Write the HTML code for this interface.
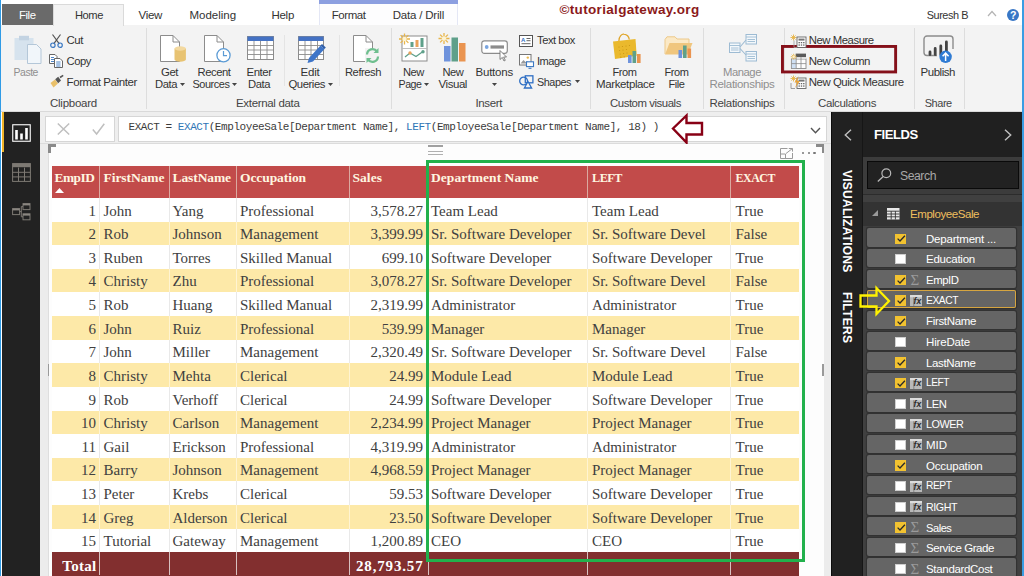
<!DOCTYPE html>
<html lang="en"><head><meta charset="utf-8"><title>Power BI Desktop - EXACT function</title>
<style>
html,body{margin:0;padding:0;}
body{width:1024px;height:576px;overflow:hidden;position:relative;background:#fff;font-family:"Liberation Sans",sans-serif;}
.a{position:absolute;}
.t{position:absolute;white-space:pre;}
svg{position:absolute;overflow:visible;}
.sep{position:absolute;width:1px;background:#dddddd;top:28px;height:81px;}
.fi{position:absolute;left:867.2px;width:149.2px;height:18.2px;background:#656565;border-radius:2px;box-shadow:0 0 0 1.2px #323232;}
.cb{position:absolute;left:895px;width:11px;height:10.2px;}
.cb.on{background:#f2c230;}
.cb.off{background:#fff;box-shadow:inset 0 0 0 1px #cfcfcf;}
.hs{position:absolute;top:166px;height:32px;width:1px;background:#dba9a0;}
.cs{position:absolute;top:198px;height:354.3px;width:1px;background:repeating-linear-gradient(#e9e9e9 0,#e9e9e9 23.62px,#fff4d2 23.62px,#fff4d2 47.24px);}
.ts{position:absolute;top:553px;height:23px;width:1px;background:#d8c0c0;}
</style></head><body>
<div class="a" style="left:0px;top:0px;width:1024.00px;height:25.00px;background:#ffffff;"></div>
<div class="a" style="left:0px;top:25px;width:1024.00px;height:86.00px;background:#f3f3f3;border-bottom:1px solid #d9d9d9;"></div>
<div class="a" style="left:1.5px;top:4px;width:51.50px;height:21.00px;background:#6a6a6a;"></div>
<div class="a" style="left:53px;top:4px;width:71.00px;height:22.00px;background:#f3f3f3;box-sizing:border-box;border:1px solid #dadada;border-bottom:none;"></div>
<div class="a" style="left:318.5px;top:0px;width:139.50px;height:25.00px;background:#fdfdfe;box-sizing:border-box;border-left:1px solid #e4e7f5;border-right:1px solid #e4e7f5;"></div>
<div class="a" style="left:318.5px;top:0px;width:139.50px;height:3.50px;background:#8c9fe0;"></div>
<svg style="left:987px;top:10px" width="10" height="7" viewBox="0 0 10 7"><path d="M1 6 L5 1.5 L9 6" fill="none" stroke="#b4b4b4" stroke-width="1.2"/></svg>
<div class="a" style="left:1006.5px;top:8.5px;width:12.4px;height:12.4px;border-radius:50%;background:#3877c6;"></div>
<div class="sep" style="left:146px"></div>
<div class="sep" style="left:390.5px"></div>
<div class="sep" style="left:589.5px"></div>
<div class="sep" style="left:703px"></div>
<div class="sep" style="left:783.5px"></div>
<div class="sep" style="left:913.75px"></div>
<div class="sep" style="left:964px"></div>
<div class="sep" style="left:283.5px;top:35px;height:51px;background:#e4e4e4"></div>
<div class="sep" style="left:339px;top:35px;height:51px;background:#e4e4e4"></div>
<svg style="left:180.0px;top:83.3px" width="5" height="3" viewBox="0 0 5 3"><path d="M0 0H5L2.5 3Z" fill="#444"/></svg>
<svg style="left:232.0px;top:83.3px" width="5" height="3" viewBox="0 0 5 3"><path d="M0 0H5L2.5 3Z" fill="#444"/></svg>
<svg style="left:327.5px;top:83.3px" width="5" height="3" viewBox="0 0 5 3"><path d="M0 0H5L2.5 3Z" fill="#444"/></svg>
<svg style="left:424.0px;top:83.3px" width="5" height="3" viewBox="0 0 5 3"><path d="M0 0H5L2.5 3Z" fill="#444"/></svg>
<svg style="left:492.0px;top:83.3px" width="5" height="3" viewBox="0 0 5 3"><path d="M0 0H5L2.5 3Z" fill="#444"/></svg>
<svg style="left:574.5px;top:80.3px" width="5" height="3" viewBox="0 0 5 3"><path d="M0 0H5L2.5 3Z" fill="#444"/></svg>
<svg style="left:781.3px;top:45.1px" width="116.1" height="28.4" viewBox="0 0 116.1 28.4"><rect x="1.45" y="1.45" width="113.2" height="25.5" fill="none" stroke="#85101a" stroke-width="2.9"/></svg>
<div class="a" style="left:0px;top:0px;width:1.30px;height:576.00px;background:#2f9be6;"></div>
<div class="a" style="left:1.5px;top:112px;width:38.50px;height:464.00px;background:#222222;"></div>
<div class="a" style="left:1.5px;top:112px;width:2.10px;height:39.50px;background:#f0b429;"></div>
<svg style="left:11.5px;top:124px" width="19" height="18" viewBox="0 0 19 18">
<rect x="0.75" y="0.75" width="17.5" height="16.5" fill="none" stroke="#ffffff" stroke-width="1.1"/>
<rect x="3.2" y="6" width="2.6" height="9.5" fill="#fff"/><rect x="8.2" y="9.5" width="2.6" height="6" fill="#fff"/><rect x="13.2" y="4" width="2.6" height="11.5" fill="#fff"/></svg>
<svg style="left:11.5px;top:163px" width="19" height="19" viewBox="0 0 19 19">
<rect x="0.6" y="0.6" width="17.8" height="17.8" fill="none" stroke="#7d7973" stroke-width="1"/>
<rect x="0.6" y="0.6" width="17.8" height="3.6" fill="#7d7973"/>
<path d="M0.6 9.3H18.4M0.6 13.9H18.4M6.5 4.6V18.4M12.5 4.6V18.4" stroke="#7d7973" stroke-width="1" fill="none"/></svg>
<svg style="left:11.5px;top:202.5px" width="19" height="18" viewBox="0 0 19 18">
<g fill="none" stroke="#7d7973" stroke-width="1"><rect x="0.6" y="5.6" width="7" height="6"/><rect x="11" y="0.6" width="7" height="6"/><rect x="11" y="10.8" width="7" height="6"/>
<path d="M7.6 8.6H9.3M9.3 3.6V13.8M9.3 3.6H11M9.3 13.8H11"/></g>
<rect x="0.6" y="5.6" width="7" height="1.8" fill="#8a8680"/><rect x="11" y="0.6" width="7" height="1.8" fill="#8a8680"/><rect x="11" y="10.8" width="7" height="1.8" fill="#8a8680"/></svg>
<div class="a" style="left:40px;top:112px;width:791.00px;height:33.00px;background:#eeeeee;"></div>
<div class="a" style="left:40px;top:143px;width:791.00px;height:1.40px;background:#dcdcdc;"></div>
<div class="a" style="left:44.5px;top:115.6px;width:70.00px;height:26.10px;background:#ffffff;box-sizing:border-box;border:1px solid #d6d6d6;"></div>
<div class="a" style="left:118.2px;top:115.6px;width:709.00px;height:26.10px;background:#ffffff;box-sizing:border-box;border:1px solid #d6d6d6;"></div>
<svg style="left:57px;top:123px" width="13" height="12" viewBox="0 0 13 12"><path d="M0.8 0.5L12.2 11.5M12.2 0.5L0.8 11.5" stroke="#bfbfbf" stroke-width="1.5" fill="none"/></svg>
<svg style="left:92px;top:123px" width="13" height="12" viewBox="0 0 13 12"><path d="M0.8 6.5L4.6 11L12.3 0.8" stroke="#bfbfbf" stroke-width="1.5" fill="none"/></svg>
<svg style="left:810px;top:126.5px" width="11" height="7" viewBox="0 0 11 7"><path d="M1 1L5.5 5.7L10 1" fill="none" stroke="#555" stroke-width="1.4"/></svg>
<svg style="left:670px;top:113px" width="36" height="32" viewBox="0 0 36 32">
<path d="M3 15.5L16.5 2.5V10H32V21.5H16.5V29.5Z" fill="none" stroke="#880015" stroke-width="2.4" stroke-linejoin="miter"/></svg>
<div class="a" style="left:40px;top:144.4px;width:791.00px;height:431.60px;background:#ececec;"></div>
<div class="a" style="left:48px;top:144.4px;width:776.30px;height:431.60px;background:#fdfdfd;"></div>
<div class="a" style="left:47.5px;top:144.4px;width:1.00px;height:431.60px;background:#dedede;"></div>
<div class="a" style="left:48.2px;top:144.4px;width:8.00px;height:2.60px;background:#8a8a8a;"></div>
<div class="a" style="left:48.2px;top:144.4px;width:2.50px;height:8.20px;background:#8a8a8a;"></div>
<div class="a" style="left:815.5px;top:144.4px;width:8.80px;height:2.60px;background:#8a8a8a;"></div>
<div class="a" style="left:821.7px;top:144.4px;width:2.60px;height:8.20px;background:#8a8a8a;"></div>
<div class="a" style="left:47.6px;top:364px;width:1.80px;height:12.00px;background:#9a9a9a;"></div>
<div class="a" style="left:822.4px;top:364px;width:1.80px;height:12.00px;background:#9a9a9a;"></div>
<div class="a" style="left:428px;top:145px;width:15.00px;height:2.00px;background:#a0a0a0;"></div>
<div class="a" style="left:428px;top:151px;width:15.00px;height:1.00px;background:#b0b0b0;"></div>
<div class="a" style="left:428px;top:154px;width:15.00px;height:1.00px;background:#b0b0b0;"></div>
<svg style="left:779.5px;top:147.5px" width="13" height="11" viewBox="0 0 13 11">
<path d="M7.5 0.5H0.5V10.5H12.5V5" fill="none" stroke="#9a9a9a" stroke-width="1"/><path d="M0.5 6H5.5V10.5" fill="none" stroke="#9a9a9a" stroke-width="1"/>
<path d="M6 5.5L12.3 0.6M8.8 0.5H12.5V3.6" fill="none" stroke="#9a9a9a" stroke-width="1"/></svg>
<div class="a" style="left:802.0999999999999px;top:151.5px;width:2.4px;height:2.4px;border-radius:50%;background:#777"></div>
<div class="a" style="left:807.8px;top:151.5px;width:2.4px;height:2.4px;border-radius:50%;background:#777"></div>
<div class="a" style="left:813.4px;top:151.5px;width:2.4px;height:2.4px;border-radius:50%;background:#777"></div>
<div class="a" style="left:51.5px;top:166px;width:747.90px;height:32.00px;background:#c24b4a;"></div>
<div class="a" style="left:51.5px;top:198.0px;width:747.90px;height:23.62px;background:#ffffff;"></div>
<div class="a" style="left:51.5px;top:221.62px;width:747.90px;height:23.62px;background:#fde9a8;"></div>
<div class="a" style="left:51.5px;top:245.24px;width:747.90px;height:23.62px;background:#ffffff;"></div>
<div class="a" style="left:51.5px;top:268.86px;width:747.90px;height:23.62px;background:#fde9a8;"></div>
<div class="a" style="left:51.5px;top:292.48px;width:747.90px;height:23.62px;background:#ffffff;"></div>
<div class="a" style="left:51.5px;top:316.1px;width:747.90px;height:23.62px;background:#fde9a8;"></div>
<div class="a" style="left:51.5px;top:339.72px;width:747.90px;height:23.62px;background:#ffffff;"></div>
<div class="a" style="left:51.5px;top:363.34px;width:747.90px;height:23.62px;background:#fde9a8;"></div>
<div class="a" style="left:51.5px;top:386.96px;width:747.90px;height:23.62px;background:#ffffff;"></div>
<div class="a" style="left:51.5px;top:410.58px;width:747.90px;height:23.62px;background:#fde9a8;"></div>
<div class="a" style="left:51.5px;top:434.2px;width:747.90px;height:23.62px;background:#ffffff;"></div>
<div class="a" style="left:51.5px;top:457.82px;width:747.90px;height:23.62px;background:#fde9a8;"></div>
<div class="a" style="left:51.5px;top:481.44px;width:747.90px;height:23.62px;background:#ffffff;"></div>
<div class="a" style="left:51.5px;top:505.06px;width:747.90px;height:23.62px;background:#fde9a8;"></div>
<div class="a" style="left:51.5px;top:528.68px;width:747.90px;height:23.62px;background:#ffffff;"></div>
<div class="a" style="left:51.5px;top:552.3px;width:747.90px;height:23.70px;background:#822f2f;"></div>
<div class="hs" style="left:99px"></div><div class="cs" style="left:99px"></div><div class="ts" style="left:99px;top:552.30px"></div>
<div class="hs" style="left:168.5px"></div><div class="cs" style="left:168.5px"></div><div class="ts" style="left:168.5px;top:552.30px"></div>
<div class="hs" style="left:235.5px"></div><div class="cs" style="left:235.5px"></div><div class="ts" style="left:235.5px;top:552.30px"></div>
<div class="hs" style="left:348.7px"></div><div class="cs" style="left:348.7px"></div><div class="ts" style="left:348.7px;top:552.30px"></div>
<div class="hs" style="left:428px"></div><div class="cs" style="left:428px"></div><div class="ts" style="left:428px;top:552.30px"></div>
<div class="hs" style="left:587px"></div><div class="cs" style="left:587px"></div><div class="ts" style="left:587px;top:552.30px"></div>
<div class="hs" style="left:730px"></div><div class="cs" style="left:730px"></div><div class="ts" style="left:730px;top:552.30px"></div>
<svg style="left:54.5px;top:187.5px" width="9" height="5" viewBox="0 0 9 5"><path d="M0 5L4.5 0L9 5Z" fill="#ffffff"/></svg>
<div class="a" style="left:425.6px;top:160px;width:379.40px;height:401.50px;background:transparent;box-sizing:border-box;border:3px solid #22b14c;"></div>
<div class="a" style="left:830.7px;top:112px;width:1.00px;height:464.00px;background:#0c0c0c;"></div>
<div class="a" style="left:831.5px;top:112px;width:31.50px;height:464.00px;background:#212121;"></div>
<div class="a" style="left:863px;top:112px;width:161.00px;height:44.60px;background:#202020;"></div>
<div class="a" style="left:862.2px;top:112px;width:1.00px;height:464.00px;background:#161616;"></div>
<div class="a" style="left:863.2px;top:156.6px;width:160.80px;height:37.40px;background:#3c3c3c;"></div>
<div class="a" style="left:863.2px;top:193.5px;width:160.80px;height:1.00px;background:#2c2c2c;"></div>
<div class="a" style="left:863.2px;top:202.2px;width:160.80px;height:23.40px;background:#333333;"></div>
<div class="a" style="left:863.2px;top:225.6px;width:160.80px;height:350.40px;background:#404040;"></div>
<div class="a" style="left:863.2px;top:194.5px;width:160.80px;height:7.70px;background:#404040;"></div>
<svg style="left:843.5px;top:129px" width="8" height="12" viewBox="0 0 8 12"><path d="M7 0.8L1.3 6L7 11.2" fill="none" stroke="#c0c0c0" stroke-width="1.4"/></svg>
<svg style="left:1004px;top:129px" width="8" height="12" viewBox="0 0 8 12"><path d="M1 0.8L6.7 6L1 11.2" fill="none" stroke="#c0c0c0" stroke-width="1.4"/></svg>
<div class="t" id="vz" style='left:847px;top:170px;width:0;height:0;'><div style='position:absolute;left:0;top:0;transform-origin:0 0;transform:rotate(90deg) translate(0,-50%);font:bold 12px/14px "Liberation Sans",sans-serif;color:#fff;letter-spacing:0.25px;white-space:pre'>VISUALIZATIONS</div></div>
<div class="t" id="vf" style='left:847px;top:291.5px;width:0;height:0;'><div style='position:absolute;left:0;top:0;transform-origin:0 0;transform:rotate(90deg) translate(0,-50%);font:bold 12px/14px "Liberation Sans",sans-serif;color:#fff;letter-spacing:0.3px;white-space:pre'>FILTERS</div></div>
<div class="a" style="left:866.7px;top:161.2px;width:152.50px;height:27.40px;background:#222222;box-sizing:border-box;border:1px solid #0a0a0a;"></div>
<svg style="left:877px;top:168px" width="15" height="14" viewBox="0 0 15 14"><circle cx="9.3" cy="5.2" r="4.4" fill="none" stroke="#b8b8b8" stroke-width="1.2"/><path d="M6.2 8.4L0.8 13.4" stroke="#b8b8b8" stroke-width="1.3"/></svg>
<svg style="left:871.5px;top:209.5px" width="6" height="6" viewBox="0 0 6 6"><path d="M6 0V6H0Z" fill="#9a9a9a"/></svg>
<svg style="left:886.5px;top:208px" width="12.5" height="11.5" viewBox="0 0 12.5 11.5"><rect width="12.5" height="11.5" fill="#e8e8e8"/>
<path d="M0 3.2H12.5M0 6H12.5M0 8.8H12.5M4.2 3.2V11.5M8.4 3.2V11.5" stroke="#333" stroke-width="0.9" fill="none"/></svg>
<div class="fi" style="top:228.40px;"></div>
<div class="cb on" style="top:233.60px"></div><svg style="left:896.5px;top:235.40px" width="8.5" height="7" viewBox="0 0 8.5 7"><path d="M0.6 3.6L3 6L7.9 0.7" fill="none" stroke="#2a2a2a" stroke-width="1.3"/></svg>
<div class="fi" style="top:249.03px;"></div>
<div class="cb off" style="top:254.22px"></div>
<div class="fi" style="top:269.65px;"></div>
<div class="cb on" style="top:274.85px"></div><svg style="left:896.5px;top:276.65px" width="8.5" height="7" viewBox="0 0 8.5 7"><path d="M0.6 3.6L3 6L7.9 0.7" fill="none" stroke="#2a2a2a" stroke-width="1.3"/></svg>
<div class="fi" style="top:290.27px;box-shadow:inset 0 0 0 1px #d6a540,0 0 0 1.2px #323232;"></div>
<div class="cb on" style="top:295.47px"></div><svg style="left:896.5px;top:297.27px" width="8.5" height="7" viewBox="0 0 8.5 7"><path d="M0.6 3.6L3 6L7.9 0.7" fill="none" stroke="#2a2a2a" stroke-width="1.3"/></svg>
<svg style="left:909.5px;top:295.07px" width="12" height="11" viewBox="0 0 12 11"><rect width="12" height="11" fill="#b9b9b9"/><rect x="0" y="0" width="12" height="2.2" fill="#dcdcdc"/><path d="M3.8 2.2V11" stroke="#777" stroke-width="0.8"/></svg>
<div class="fi" style="top:310.90px;"></div>
<div class="cb on" style="top:316.10px"></div><svg style="left:896.5px;top:317.90px" width="8.5" height="7" viewBox="0 0 8.5 7"><path d="M0.6 3.6L3 6L7.9 0.7" fill="none" stroke="#2a2a2a" stroke-width="1.3"/></svg>
<div class="fi" style="top:331.52px;"></div>
<div class="cb off" style="top:336.72px"></div>
<div class="fi" style="top:352.15px;"></div>
<div class="cb on" style="top:357.35px"></div><svg style="left:896.5px;top:359.15px" width="8.5" height="7" viewBox="0 0 8.5 7"><path d="M0.6 3.6L3 6L7.9 0.7" fill="none" stroke="#2a2a2a" stroke-width="1.3"/></svg>
<div class="fi" style="top:372.77px;"></div>
<div class="cb on" style="top:377.97px"></div><svg style="left:896.5px;top:379.77px" width="8.5" height="7" viewBox="0 0 8.5 7"><path d="M0.6 3.6L3 6L7.9 0.7" fill="none" stroke="#2a2a2a" stroke-width="1.3"/></svg>
<svg style="left:909.5px;top:377.57px" width="12" height="11" viewBox="0 0 12 11"><rect width="12" height="11" fill="#b9b9b9"/><rect x="0" y="0" width="12" height="2.2" fill="#dcdcdc"/><path d="M3.8 2.2V11" stroke="#777" stroke-width="0.8"/></svg>
<div class="fi" style="top:393.40px;"></div>
<div class="cb off" style="top:398.60px"></div>
<svg style="left:909.5px;top:398.20px" width="12" height="11" viewBox="0 0 12 11"><rect width="12" height="11" fill="#b9b9b9"/><rect x="0" y="0" width="12" height="2.2" fill="#dcdcdc"/><path d="M3.8 2.2V11" stroke="#777" stroke-width="0.8"/></svg>
<div class="fi" style="top:414.02px;"></div>
<div class="cb off" style="top:419.22px"></div>
<svg style="left:909.5px;top:418.82px" width="12" height="11" viewBox="0 0 12 11"><rect width="12" height="11" fill="#b9b9b9"/><rect x="0" y="0" width="12" height="2.2" fill="#dcdcdc"/><path d="M3.8 2.2V11" stroke="#777" stroke-width="0.8"/></svg>
<div class="fi" style="top:434.65px;"></div>
<div class="cb off" style="top:439.85px"></div>
<svg style="left:909.5px;top:439.45px" width="12" height="11" viewBox="0 0 12 11"><rect width="12" height="11" fill="#b9b9b9"/><rect x="0" y="0" width="12" height="2.2" fill="#dcdcdc"/><path d="M3.8 2.2V11" stroke="#777" stroke-width="0.8"/></svg>
<div class="fi" style="top:455.27px;"></div>
<div class="cb on" style="top:460.47px"></div><svg style="left:896.5px;top:462.27px" width="8.5" height="7" viewBox="0 0 8.5 7"><path d="M0.6 3.6L3 6L7.9 0.7" fill="none" stroke="#2a2a2a" stroke-width="1.3"/></svg>
<div class="fi" style="top:475.90px;"></div>
<div class="cb off" style="top:481.10px"></div>
<svg style="left:909.5px;top:480.70px" width="12" height="11" viewBox="0 0 12 11"><rect width="12" height="11" fill="#b9b9b9"/><rect x="0" y="0" width="12" height="2.2" fill="#dcdcdc"/><path d="M3.8 2.2V11" stroke="#777" stroke-width="0.8"/></svg>
<div class="fi" style="top:496.52px;"></div>
<div class="cb off" style="top:501.72px"></div>
<svg style="left:909.5px;top:501.32px" width="12" height="11" viewBox="0 0 12 11"><rect width="12" height="11" fill="#b9b9b9"/><rect x="0" y="0" width="12" height="2.2" fill="#dcdcdc"/><path d="M3.8 2.2V11" stroke="#777" stroke-width="0.8"/></svg>
<div class="fi" style="top:517.15px;"></div>
<div class="cb on" style="top:522.35px"></div><svg style="left:896.5px;top:524.15px" width="8.5" height="7" viewBox="0 0 8.5 7"><path d="M0.6 3.6L3 6L7.9 0.7" fill="none" stroke="#2a2a2a" stroke-width="1.3"/></svg>
<div class="fi" style="top:537.77px;"></div>
<div class="cb off" style="top:542.98px"></div>
<div class="fi" style="top:558.40px;"></div>
<div class="cb off" style="top:563.60px"></div>
<svg style="left:858px;top:285px" width="34" height="32" viewBox="0 0 34 32">
<path d="M2.5 10.5H18.5V3L31 16L18.5 29V21.5H2.5Z" fill="none" stroke="#fff200" stroke-width="2.3" stroke-linejoin="miter"/></svg>
<svg style="left:14px;top:35px" width="28" height="29" viewBox="0 0 28 29">
<rect x="0.5" y="3" width="19" height="22" fill="#d6e3ee"/><rect x="5" y="0.8" width="10" height="4.5" fill="#c3d3e2"/>
<path d="M13.5 9.5H22.5L27 14V28.5H13.5Z" fill="#f1f6fa" stroke="#b4c7d8" stroke-width="1"/></svg>
<svg style="left:50px;top:33.5px" width="13" height="14" viewBox="0 0 13 14">
<path d="M2.5 0.5L9.3 9.8M10.5 0.5L3.7 9.8" stroke="#555" stroke-width="1.2" fill="none"/>
<circle cx="2.9" cy="11.2" r="2.2" fill="none" stroke="#3b78c2" stroke-width="1.2"/><circle cx="10.1" cy="11.2" r="2.2" fill="none" stroke="#3b78c2" stroke-width="1.2"/></svg>
<svg style="left:49px;top:54px" width="14" height="14" viewBox="0 0 14 14">
<path d="M0.5 0.5H6L8 2.5V9.5H0.5Z" fill="#fff" stroke="#666" stroke-width="1"/><path d="M2 3.5H5M2 5.5H6M2 7.5H6" stroke="#3b78c2" stroke-width="0.9"/>
<path d="M5.5 4.5H11L13.5 7V13.5H5.5Z" fill="#fff" stroke="#666" stroke-width="1"/><path d="M7.2 8H11.5M7.2 10H11.5M7.2 12H11.5" stroke="#3b78c2" stroke-width="0.9"/></svg>
<svg style="left:49.5px;top:75px" width="14" height="13" viewBox="0 0 14 13">
<path d="M0.5 8L5 4.5L8 8.5L3.5 12.5Z" fill="#e9c06a"/><path d="M5.2 4.3L8.2 1.8L11 5.5L8.2 8.2Z" fill="#555"/><path d="M10 2.5L13.2 0.3" stroke="#555" stroke-width="1.6"/></svg>
<svg style="left:160px;top:35px" width="27" height="28" viewBox="0 0 27 28"><path d="M0.5 0.5H13.0L19.5 7.0V26.5H0.5Z" fill="#ffffff" stroke="#8c8c8c" stroke-width="1"/><path d="M13.0 0.5V7.0H19.5" fill="none" stroke="#8c8c8c" stroke-width="1"/>
<path d="M14.5 13.5V24.5A5.7 2.2 0 0 0 25.9 24.5V13.5Z" fill="#e8c372"/><ellipse cx="20.2" cy="13.5" rx="5.7" ry="2.2" fill="#f3d9a0"/></svg>
<svg style="left:204px;top:35px" width="27" height="28" viewBox="0 0 27 28"><path d="M0.5 0.5H13.0L19.5 7.0V26.5H0.5Z" fill="#ffffff" stroke="#8c8c8c" stroke-width="1"/><path d="M13.0 0.5V7.0H19.5" fill="none" stroke="#8c8c8c" stroke-width="1"/>
<circle cx="19.5" cy="20.3" r="6.6" fill="#ffffff" stroke="#5b9bd5" stroke-width="1.3"/><path d="M19.5 16V20.6H23" fill="none" stroke="#5b9bd5" stroke-width="1.2"/></svg>
<svg style="left:246.5px;top:36px" width="27" height="24" viewBox="0 0 27 24">
<rect x="0.5" y="0.5" width="26" height="23" fill="#ffffff" stroke="#8c8c8c"/><rect x="0.5" y="0.5" width="26" height="4.5" fill="#4472c4"/>
<path d="M0.5 9.5H26.5M0.5 14H26.5M0.5 18.5H26.5M7 5V23.5M13.5 5V23.5M20 5V23.5" stroke="#8c8c8c" stroke-width="0.9" fill="none"/></svg>
<svg style="left:298px;top:35.5px" width="28" height="28" viewBox="0 0 28 28">
<rect x="0.5" y="0.5" width="25" height="23" fill="#ffffff" stroke="#8c8c8c"/><rect x="0.5" y="0.5" width="25" height="4.5" fill="#4472c4"/>
<path d="M0.5 9.5H25.5M0.5 14H25.5M0.5 18.5H25.5M7 5V23.5M13 5V23.5M19.5 5V23.5" stroke="#8c8c8c" stroke-width="0.9" fill="none"/>
<path d="M11 22L22.5 9.5L26.5 13L15 25.5L9.5 27Z" fill="#3e75c8"/><path d="M22.5 9.5L24 8L27.8 11.5L26.5 13Z" fill="#2f5ea8"/></svg>
<svg style="left:353px;top:35px" width="27" height="28" viewBox="0 0 27 28"><path d="M0.5 0.5H13.0L19.5 7.0V26.5H0.5Z" fill="#ffffff" stroke="#8c8c8c" stroke-width="1"/><path d="M13.0 0.5V7.0H19.5" fill="none" stroke="#8c8c8c" stroke-width="1"/>
<rect x="12" y="13" width="15" height="15" fill="#f3f3f3"/>
<path d="M14 19.5A5.5 5.5 0 0 1 24 16.5" fill="none" stroke="#6fbf8f" stroke-width="2.2"/><path d="M25.5 13V18H20.5Z" fill="#6fbf8f"/>
<path d="M25 21.5A5.5 5.5 0 0 1 15 24.5" fill="none" stroke="#6fbf8f" stroke-width="2.2"/><path d="M13.5 28V23H18.5Z" fill="#6fbf8f"/></svg>
<svg style="left:398.5px;top:32.5px" width="29" height="29" viewBox="0 0 29 29">
<rect x="3" y="3" width="25" height="25" fill="#ffffff" stroke="#8c8c8c"/><path d="M3 15.5H28" stroke="#b8b8b8" stroke-width="0.9"/>
<rect x="11.5" y="9" width="3" height="5" fill="#5fa08a"/><rect x="16.5" y="7" width="3" height="7" fill="#e9a25a"/><rect x="21.5" y="5" width="3" height="9" fill="#5fa08a"/>
<path d="M6 24L11 20L17 23.5L24 18.5" fill="none" stroke="#5fa08a" stroke-width="1.3"/><circle cx="11" cy="20" r="1.7" fill="#e9a25a"/><circle cx="24" cy="18.8" r="1.7" fill="#5fa08a"/>
<g stroke="#e8b54a" stroke-width="1.3"><path d="M0.0 6H11.0M5.5 0.5V11.5M1.6 2.1L9.4 9.9M1.6 9.9L9.4 2.1"/></g><circle cx="5.5" cy="6" r="2.2" fill="#fdf3d2"/></svg>
<svg style="left:438.5px;top:32.5px" width="29" height="30" viewBox="0 0 29 30">
<rect x="5" y="13" width="6.5" height="15.5" fill="#6f93dc"/><rect x="12.5" y="4.5" width="6.5" height="24" fill="#5fa08a"/><rect x="20" y="10" width="6.5" height="18.5" fill="#ea9450"/>
<g stroke="#e8b54a" stroke-width="1.3"><path d="M-0.5 5.5H10.5M5 0.0V11.0M1.1 1.6L8.9 9.4M1.1 9.4L8.9 1.6"/></g><circle cx="5" cy="5.5" r="2.2" fill="#fdf3d2"/></svg>
<svg style="left:480.5px;top:40px" width="28" height="22" viewBox="0 0 28 22">
<rect x="0.8" y="0.8" width="25.5" height="12.5" rx="2.5" fill="#ffffff" stroke="#8c8c8c" stroke-width="1.2"/><circle cx="5.7" cy="7" r="1.9" fill="#7aa5e0"/><rect x="9.5" y="5.4" width="13.5" height="3.2" fill="#8c8c8c"/>
<path d="M19 10.5V19.5L21.3 17.4L23 21L24.3 20.3L22.6 17H25.5Z" fill="#ffffff" stroke="#666" stroke-width="0.8"/></svg>
<svg style="left:519px;top:34.5px" width="14" height="12" viewBox="0 0 14 12"><rect x="0.5" y="0.5" width="13" height="11" fill="#fff" stroke="#555"/>
<text x="2" y="7.2" style='font:bold 6px "Liberation Sans",sans-serif' fill="#2f6fc4">A</text><path d="M7.5 3.5H11.5M7.5 5.7H11.5M2.5 8.7H11.5" stroke="#555" stroke-width="0.9"/></svg>
<svg style="left:519px;top:54px" width="15" height="15" viewBox="0 0 15 15"><rect x="0.5" y="0.5" width="11.5" height="10.5" fill="#fff" stroke="#777"/>
<path d="M1.5 9.5L4.5 6L6.8 8.3L8 7L10 9.5Z" fill="#9a9a9a"/><circle cx="8.8" cy="3.6" r="1.2" fill="#e8b54a"/>
<rect x="7.5" y="7.8" width="7" height="4.8" fill="#fff" stroke="#3b78c2" stroke-width="1.1"/><path d="M9.5 14.3H12.5" stroke="#3b78c2" stroke-width="1.1"/></svg>
<svg style="left:518.5px;top:75px" width="15" height="14" viewBox="0 0 15 14"><circle cx="4.6" cy="6" r="3.9" fill="none" stroke="#2f6fc4" stroke-width="1.3"/>
<rect x="6.3" y="0.8" width="7.6" height="7" fill="none" stroke="#2f6fc4" stroke-width="1.3"/><path d="M9 6.5L12.6 13H5.4Z" fill="#f3f3f3" stroke="#2f6fc4" stroke-width="1.3"/></svg>
<svg style="left:611.5px;top:32.5px" width="30" height="31" viewBox="0 0 30 31">
<path d="M6.9 8C6.9 3 10 0.8 12 1.2C14.5 1.6 16.8 3.5 17.3 6.5" fill="none" stroke="#e0a62b" stroke-width="1.3"/>
<path d="M1 8.5L23.5 6L24.7 22.7L3 26Z" fill="#eab92d"/>
<g fill="#c99616"><circle cx="7" cy="14" r=".6"/><circle cx="10.5" cy="13.5" r=".6"/><circle cx="14" cy="13" r=".6"/><circle cx="17.5" cy="12.5" r=".6"/><circle cx="7.6" cy="17.5" r=".6"/><circle cx="11" cy="17" r=".6"/><circle cx="14.5" cy="16.5" r=".6"/><circle cx="8.2" cy="21" r=".6"/><circle cx="11.6" cy="20.5" r=".6"/><circle cx="15" cy="20" r=".6"/><circle cx="8.8" cy="24.2" r=".6"/><circle cx="12.2" cy="23.8" r=".6"/></g>
<rect x="16" y="22" width="3.6" height="8" fill="#6f93dc"/><rect x="20.5" y="18" width="3.6" height="12" fill="#5fa08a"/><rect x="25" y="21" width="3.6" height="9" fill="#ea9450"/></svg>
<svg style="left:663.5px;top:36px" width="29" height="23" viewBox="0 0 29 23">
<path d="M1 18V3.5L3 0.8H11L13 3H25V7" fill="#fbe9c6" stroke="#edc98a" stroke-width="1"/>
<path d="M1 18.5L5.5 7H28.5L24 18.5Z" fill="#f0c67e"/>
<rect x="14.5" y="14" width="3.6" height="8" fill="#6f93dc"/><rect x="19" y="9.5" width="3.6" height="12.5" fill="#5fa08a"/><rect x="23.5" y="12.5" width="3.6" height="9.5" fill="#ea9450"/></svg>
<svg style="left:729px;top:34px" width="28" height="28" viewBox="0 0 28 28"><g fill="#f4f8fb" stroke="#9dbbd3" stroke-width="1">
<rect x="0.5" y="9" width="10.5" height="9.5"/><rect x="17" y="0.5" width="10.5" height="9.5"/><rect x="17" y="17.5" width="10.5" height="9.5"/></g>
<g stroke="#9dbbd3" stroke-width="0.9"><path d="M0.5 11.5H11M2 14H9.5M2 16H9.5M17 3H27.5M18.5 5.5H26M18.5 7.5H26M17 20H27.5M18.5 22.5H26M18.5 24.5H26"/></g>
<path d="M11 13L17 6M11 14.5L17 21" fill="none" stroke="#9dbbd3" stroke-width="1.1"/></svg>
<svg style="left:790px;top:33.5px" width="17" height="14" viewBox="0 0 17 14"><g stroke="#e8b54a" stroke-width="0.9"><path d="M0.5 3.5H6.5M3.5 0.5V6.5M1.4 1.4L5.6 5.6M1.4 5.6L5.6 1.4"/></g><rect x="7" y="3" width="9" height="10.5" fill="#fff" stroke="#666" stroke-width="0.9"/><rect x="8.5" y="4.6" width="6" height="2" fill="#777"/><g fill="#666"><rect x="8.5" y="8" width="1.4" height="1.3"/><rect x="10.8" y="8" width="1.4" height="1.3"/><rect x="13.1" y="8" width="1.4" height="1.3"/><rect x="8.5" y="10.4" width="1.4" height="1.3"/><rect x="10.8" y="10.4" width="1.4" height="1.3"/><rect x="13.1" y="10.4" width="1.4" height="1.3"/></g><path d="M4 6.5V13.5H7" fill="none" stroke="#999" stroke-width="0.8"/></svg>
<svg style="left:790px;top:52.5px" width="17" height="16" viewBox="0 0 17 16"><rect x="1.4" y="6" width="14.6" height="9.5" fill="#fdfdfd" stroke="#8a8a8a" stroke-width="0.9"/><rect x="5.7" y="0.6" width="10.3" height="3.6" fill="#5a5a5a"/><rect x="5.7" y="4.2" width="10.3" height="1.8" fill="#e0e0e0"/><rect x="1.9" y="6.5" width="4.2" height="8.6" fill="#cfe0f3"/><path d="M1.4 10.6H16M6.2 4.2V15.5M11 4.2V15.5" stroke="#8a8a8a" stroke-width="0.8"/><g stroke="#e8b54a" stroke-width="0.9"><path d="M0.8 3.7H6.6M3.7 0.8V6.6M1.7 1.7L5.7 5.7M1.7 5.7L5.7 1.7"/></g><circle cx="3.7" cy="3.7" r="1.3" fill="#fbeec8"/></svg>
<svg style="left:790px;top:75px" width="17" height="14" viewBox="0 0 17 14"><g stroke="#e8b54a" stroke-width="0.9"><path d="M0.5 3.5H6.5M3.5 0.5V6.5M1.4 1.4L5.6 5.6M1.4 5.6L5.6 1.4"/></g><rect x="7" y="3" width="9" height="10.5" fill="#fff" stroke="#666" stroke-width="0.9"/><rect x="8.5" y="4.6" width="6" height="2" fill="#777"/><g fill="#666"><rect x="8.5" y="8" width="1.4" height="1.3"/><rect x="10.8" y="8" width="1.4" height="1.3"/><rect x="13.1" y="8" width="1.4" height="1.3"/><rect x="8.5" y="10.4" width="1.4" height="1.3"/><rect x="10.8" y="10.4" width="1.4" height="1.3"/><rect x="13.1" y="10.4" width="1.4" height="1.3"/></g><path d="M8.5 1L4.5 7.5H7L5 13L10 6H7.3Z" fill="#e8a33a"/><path d="M1 8V13.5H5" fill="none" stroke="#888" stroke-width="0.8"/></svg>
<svg style="left:923px;top:35px" width="31" height="29" viewBox="0 0 31 29">
<path d="M14 20.5H4A3 3 0 0 1 1 17.5V4A3 3 0 0 1 4 1H27A3 3 0 0 1 30 4V14" fill="none" stroke="#8c8c8c" stroke-width="1.4"/>
<g stroke="#444" stroke-width="2.8" stroke-linecap="round"><path d="M7 17V19.5M12.2 13.5V19.5M17.8 11V19.5M23.4 7V16"/></g>
<circle cx="22.6" cy="21.8" r="6.2" fill="#2f7bd3"/><path d="M22.6 26V18.5M19.6 21.3L22.6 18.2L25.6 21.3" fill="none" stroke="#fff" stroke-width="1.5"/></svg>
<div class="a" style="left:1022.2px;top:0px;width:1.80px;height:576.00px;background:#3a9de3;"></div>
<div class="t" style='left:19.00px;top:7.00px;font:normal 11.36px/16px "Liberation Sans", sans-serif;color:#ffffff;letter-spacing:-0.450px;'>File</div>
<div class="t" style='left:75.00px;top:7.00px;font:normal 11.17px/16px "Liberation Sans", sans-serif;color:#333;letter-spacing:-0.450px;'>Home</div>
<div class="t" style='left:138.50px;top:7.00px;font:normal 11.5px/16px "Liberation Sans", sans-serif;color:#333;letter-spacing:-0.305px;'>View</div>
<div class="t" style='left:189.50px;top:7.00px;font:normal 11.5px/16px "Liberation Sans", sans-serif;color:#333;letter-spacing:-0.021px;'>Modeling</div>
<div class="t" style='left:271.50px;top:7.00px;font:normal 11.5px/16px "Liberation Sans", sans-serif;color:#333;letter-spacing:-0.289px;'>Help</div>
<div class="t" style='left:331.75px;top:7.00px;font:normal 11.5px/16px "Liberation Sans", sans-serif;color:#333;letter-spacing:-0.445px;'>Format</div>
<div class="t" style='left:392.75px;top:7.00px;font:normal 11.5px/16px "Liberation Sans", sans-serif;color:#333;letter-spacing:-0.203px;'>Data / Drill</div>
<div class="t" style='left:559.50px;top:2.00px;font:bold 13.5px/16px "Liberation Sans", sans-serif;color:#8b1a1a;letter-spacing:0.327px;'>©tutorialgateway.org</div>
<div class="t" style='left:926.75px;top:7.00px;font:normal 10.9px/16px "Liberation Sans", sans-serif;color:#333;letter-spacing:-0.450px;'>Suresh B</div>
<div class="t" style='left:1010.00px;top:6.90px;font:bold 10.5px/16px "Liberation Sans", sans-serif;color:#ffffff;letter-spacing:0.000px;'>?</div>
<div class="t" style='left:13.50px;top:64.60px;font:normal 10.46px/16px "Liberation Sans", sans-serif;color:#8f8f8f;letter-spacing:-0.450px;'>Paste</div>
<div class="t" style='left:66.50px;top:32.00px;font:normal 11.46px/16px "Liberation Sans", sans-serif;color:#333;letter-spacing:-0.450px;'>Cut</div>
<div class="t" style='left:66.50px;top:53.00px;font:normal 11.26px/16px "Liberation Sans", sans-serif;color:#333;letter-spacing:-0.450px;'>Copy</div>
<div class="t" style='left:66.50px;top:73.50px;font:normal 11.5px/16px "Liberation Sans", sans-serif;color:#333;letter-spacing:-0.397px;'>Format Painter</div>
<div class="t" style='left:50.00px;top:95.00px;font:normal 11.5px/16px "Liberation Sans", sans-serif;color:#444444;letter-spacing:-0.248px;'>Clipboard</div>
<div class="t" style='left:161.00px;top:64.00px;font:normal 11.38px/16px "Liberation Sans", sans-serif;color:#333;letter-spacing:-0.450px;'>Get</div>
<div class="t" style='left:155.00px;top:76.00px;font:normal 11.26px/16px "Liberation Sans", sans-serif;color:#333;letter-spacing:-0.450px;'>Data</div>
<div class="t" style='left:197.50px;top:64.00px;font:normal 11.27px/16px "Liberation Sans", sans-serif;color:#333;letter-spacing:-0.450px;'>Recent</div>
<div class="t" style='left:192.50px;top:76.00px;font:normal 10.94px/16px "Liberation Sans", sans-serif;color:#333;letter-spacing:-0.450px;'>Sources</div>
<div class="t" style='left:246.50px;top:64.00px;font:normal 11.4px/16px "Liberation Sans", sans-serif;color:#333;letter-spacing:-0.450px;'>Enter</div>
<div class="t" style='left:248.00px;top:76.00px;font:normal 11.26px/16px "Liberation Sans", sans-serif;color:#333;letter-spacing:-0.450px;'>Data</div>
<div class="t" style='left:300.50px;top:64.00px;font:normal 11.5px/16px "Liberation Sans", sans-serif;color:#333;letter-spacing:-0.207px;'>Edit</div>
<div class="t" style='left:288.50px;top:76.00px;font:normal 11.32px/16px "Liberation Sans", sans-serif;color:#333;letter-spacing:-0.450px;'>Queries</div>
<div class="t" style='left:345.00px;top:64.00px;font:normal 11.18px/16px "Liberation Sans", sans-serif;color:#333;letter-spacing:-0.450px;'>Refresh</div>
<div class="t" style='left:236.00px;top:95.00px;font:normal 11.5px/16px "Liberation Sans", sans-serif;color:#444444;letter-spacing:-0.328px;'>External data</div>
<div class="t" style='left:403.00px;top:64.00px;font:normal 11.17px/16px "Liberation Sans", sans-serif;color:#333;letter-spacing:-0.450px;'>New</div>
<div class="t" style='left:398.50px;top:76.00px;font:normal 10.62px/16px "Liberation Sans", sans-serif;color:#333;letter-spacing:-0.450px;'>Page</div>
<div class="t" style='left:442.50px;top:64.00px;font:normal 11.17px/16px "Liberation Sans", sans-serif;color:#333;letter-spacing:-0.450px;'>New</div>
<div class="t" style='left:438.50px;top:76.00px;font:normal 11.5px/16px "Liberation Sans", sans-serif;color:#333;letter-spacing:-0.438px;'>Visual</div>
<div class="t" style='left:475.50px;top:64.00px;font:normal 11.5px/16px "Liberation Sans", sans-serif;color:#333;letter-spacing:-0.214px;'>Buttons</div>
<div class="t" style='left:475.50px;top:95.00px;font:normal 11.5px/16px "Liberation Sans", sans-serif;color:#444444;letter-spacing:-0.378px;'>Insert</div>
<div class="t" style='left:537.00px;top:32.00px;font:normal 11.17px/16px "Liberation Sans", sans-serif;color:#333;letter-spacing:-0.450px;'>Text box</div>
<div class="t" style='left:537.00px;top:53.00px;font:normal 11.06px/16px "Liberation Sans", sans-serif;color:#333;letter-spacing:-0.450px;'>Image</div>
<div class="t" style='left:537.00px;top:73.50px;font:normal 10.82px/16px "Liberation Sans", sans-serif;color:#333;letter-spacing:-0.450px;'>Shapes</div>
<div class="t" style='left:612.50px;top:64.00px;font:normal 11.05px/16px "Liberation Sans", sans-serif;color:#333;letter-spacing:-0.450px;'>From</div>
<div class="t" style='left:596.00px;top:76.00px;font:normal 11.5px/16px "Liberation Sans", sans-serif;color:#333;letter-spacing:-0.376px;'>Marketplace</div>
<div class="t" style='left:664.50px;top:64.00px;font:normal 11.05px/16px "Liberation Sans", sans-serif;color:#333;letter-spacing:-0.450px;'>From</div>
<div class="t" style='left:668.50px;top:76.00px;font:normal 11.05px/16px "Liberation Sans", sans-serif;color:#333;letter-spacing:-0.450px;'>File</div>
<div class="t" style='left:610.00px;top:95.00px;font:normal 11.4px/16px "Liberation Sans", sans-serif;color:#444444;letter-spacing:-0.450px;'>Custom visuals</div>
<div class="t" style='left:723.00px;top:64.00px;font:normal 11.26px/16px "Liberation Sans", sans-serif;color:#8f8f8f;letter-spacing:-0.450px;'>Manage</div>
<div class="t" style='left:709.50px;top:76.00px;font:normal 11.5px/16px "Liberation Sans", sans-serif;color:#8f8f8f;letter-spacing:-0.311px;'>Relationships</div>
<div class="t" style='left:709.50px;top:95.00px;font:normal 11.5px/16px "Liberation Sans", sans-serif;color:#444444;letter-spacing:-0.311px;'>Relationships</div>
<div class="t" style='left:808.75px;top:32.00px;font:normal 11.34px/16px "Liberation Sans", sans-serif;color:#333;letter-spacing:-0.450px;'>New Measure</div>
<div class="t" style='left:808.75px;top:53.00px;font:normal 11.49px/16px "Liberation Sans", sans-serif;color:#333;letter-spacing:-0.450px;'>New Column</div>
<div class="t" style='left:808.75px;top:73.50px;font:normal 11.4px/16px "Liberation Sans", sans-serif;color:#333;letter-spacing:-0.450px;'>New Quick Measure</div>
<div class="t" style='left:818.00px;top:95.00px;font:normal 11.5px/16px "Liberation Sans", sans-serif;color:#444444;letter-spacing:-0.388px;'>Calculations</div>
<div class="t" style='left:920.50px;top:64.00px;font:normal 11.48px/16px "Liberation Sans", sans-serif;color:#333;letter-spacing:-0.450px;'>Publish</div>
<div class="t" style='left:924.75px;top:95.00px;font:normal 10.96px/16px "Liberation Sans", sans-serif;color:#444444;letter-spacing:-0.450px;'>Share</div>
<div class="t" style='left:128.50px;top:119.20px;font:normal 11px/16px "Liberation Mono", monospace;color:#3b3b3b;letter-spacing:-0.433px;'>EXACT = <span style="color:#2e75b6">EXACT</span>(EmployeeSale[Department Name], <span style="color:#2e75b6">LEFT</span>(EmployeeSale[Department Name], 18) )</div>
<div class="t" style='left:54.50px;top:170.00px;font:bold 13.34px/16px "Liberation Serif", serif;color:#fff6e0;letter-spacing:-0.450px;'>EmpID</div>
<div class="t" style='left:103.50px;top:170.00px;font:bold 13.5px/16px "Liberation Serif", serif;color:#fff6e0;letter-spacing:-0.054px;'>FirstName</div>
<div class="t" style='left:172.50px;top:170.00px;font:bold 13.5px/16px "Liberation Serif", serif;color:#fff6e0;letter-spacing:-0.094px;'>LastName</div>
<div class="t" style='left:240.00px;top:170.00px;font:bold 13.5px/16px "Liberation Serif", serif;color:#fff6e0;letter-spacing:-0.077px;'>Occupation</div>
<div class="t" style='left:352.50px;top:170.00px;font:bold 13.5px/16px "Liberation Serif", serif;color:#fff6e0;letter-spacing:0.047px;'>Sales</div>
<div class="t" style='left:431.00px;top:170.00px;font:bold 13.5px/16px "Liberation Serif", serif;color:#fff6e0;letter-spacing:0.044px;'>Department Name</div>
<div class="t" style='left:592.00px;top:170.00px;font:bold 12.17px/16px "Liberation Serif", serif;color:#fff6e0;letter-spacing:-0.450px;'>LEFT</div>
<div class="t" style='left:735.50px;top:170.00px;font:bold 11.92px/16px "Liberation Serif", serif;color:#fff6e0;letter-spacing:-0.450px;'>EXACT</div>
<div class="t" style='right:928.00px;top:202.60px;font:normal 15px/16px "Liberation Serif", serif;color:#404040;letter-spacing:0.000px;'>1</div>
<div class="t" style='left:103.50px;top:202.60px;font:normal 15px/16px "Liberation Serif", serif;color:#404040;letter-spacing:0.000px;'>John</div>
<div class="t" style='left:172.50px;top:202.60px;font:normal 15px/16px "Liberation Serif", serif;color:#404040;letter-spacing:0.000px;'>Yang</div>
<div class="t" style='left:240.00px;top:202.60px;font:normal 15px/16px "Liberation Serif", serif;color:#404040;letter-spacing:0.000px;'>Professional</div>
<div class="t" style='right:601.00px;top:202.60px;font:normal 15px/16px "Liberation Serif", serif;color:#404040;letter-spacing:0.000px;'>3,578.27</div>
<div class="t" style='left:431.00px;top:202.60px;font:normal 15px/16px "Liberation Serif", serif;color:#404040;letter-spacing:0.000px;'>Team Lead</div>
<div class="t" style='left:592.00px;top:202.60px;font:normal 15px/16px "Liberation Serif", serif;color:#404040;letter-spacing:0.000px;'>Team Lead</div>
<div class="t" style='left:735.50px;top:202.60px;font:normal 15px/16px "Liberation Serif", serif;color:#404040;letter-spacing:0.000px;'>True</div>
<div class="t" style='right:928.00px;top:226.22px;font:normal 15px/16px "Liberation Serif", serif;color:#404040;letter-spacing:0.000px;'>2</div>
<div class="t" style='left:103.50px;top:226.22px;font:normal 15px/16px "Liberation Serif", serif;color:#404040;letter-spacing:0.000px;'>Rob</div>
<div class="t" style='left:172.50px;top:226.22px;font:normal 15px/16px "Liberation Serif", serif;color:#404040;letter-spacing:0.000px;'>Johnson</div>
<div class="t" style='left:240.00px;top:226.22px;font:normal 15px/16px "Liberation Serif", serif;color:#404040;letter-spacing:0.000px;'>Management</div>
<div class="t" style='right:601.00px;top:226.22px;font:normal 15px/16px "Liberation Serif", serif;color:#404040;letter-spacing:0.000px;'>3,399.99</div>
<div class="t" style='left:431.00px;top:226.22px;font:normal 15px/16px "Liberation Serif", serif;color:#404040;letter-spacing:0.000px;'>Sr. Software Developer</div>
<div class="t" style='left:592.00px;top:226.22px;font:normal 15px/16px "Liberation Serif", serif;color:#404040;letter-spacing:0.000px;'>Sr. Software Devel</div>
<div class="t" style='left:735.50px;top:226.22px;font:normal 15px/16px "Liberation Serif", serif;color:#404040;letter-spacing:0.000px;'>False</div>
<div class="t" style='right:928.00px;top:249.84px;font:normal 15px/16px "Liberation Serif", serif;color:#404040;letter-spacing:0.000px;'>3</div>
<div class="t" style='left:103.50px;top:249.84px;font:normal 15px/16px "Liberation Serif", serif;color:#404040;letter-spacing:0.000px;'>Ruben</div>
<div class="t" style='left:172.50px;top:249.84px;font:normal 15px/16px "Liberation Serif", serif;color:#404040;letter-spacing:0.000px;'>Torres</div>
<div class="t" style='left:240.00px;top:249.84px;font:normal 15px/16px "Liberation Serif", serif;color:#404040;letter-spacing:0.000px;'>Skilled Manual</div>
<div class="t" style='right:601.00px;top:249.84px;font:normal 15px/16px "Liberation Serif", serif;color:#404040;letter-spacing:0.000px;'>699.10</div>
<div class="t" style='left:431.00px;top:249.84px;font:normal 15px/16px "Liberation Serif", serif;color:#404040;letter-spacing:0.000px;'>Software Developer</div>
<div class="t" style='left:592.00px;top:249.84px;font:normal 15px/16px "Liberation Serif", serif;color:#404040;letter-spacing:0.000px;'>Software Developer</div>
<div class="t" style='left:735.50px;top:249.84px;font:normal 15px/16px "Liberation Serif", serif;color:#404040;letter-spacing:0.000px;'>True</div>
<div class="t" style='right:928.00px;top:273.46px;font:normal 15px/16px "Liberation Serif", serif;color:#404040;letter-spacing:0.000px;'>4</div>
<div class="t" style='left:103.50px;top:273.46px;font:normal 15px/16px "Liberation Serif", serif;color:#404040;letter-spacing:0.000px;'>Christy</div>
<div class="t" style='left:172.50px;top:273.46px;font:normal 15px/16px "Liberation Serif", serif;color:#404040;letter-spacing:0.000px;'>Zhu</div>
<div class="t" style='left:240.00px;top:273.46px;font:normal 15px/16px "Liberation Serif", serif;color:#404040;letter-spacing:0.000px;'>Professional</div>
<div class="t" style='right:601.00px;top:273.46px;font:normal 15px/16px "Liberation Serif", serif;color:#404040;letter-spacing:0.000px;'>3,078.27</div>
<div class="t" style='left:431.00px;top:273.46px;font:normal 15px/16px "Liberation Serif", serif;color:#404040;letter-spacing:0.000px;'>Sr. Software Developer</div>
<div class="t" style='left:592.00px;top:273.46px;font:normal 15px/16px "Liberation Serif", serif;color:#404040;letter-spacing:0.000px;'>Sr. Software Devel</div>
<div class="t" style='left:735.50px;top:273.46px;font:normal 15px/16px "Liberation Serif", serif;color:#404040;letter-spacing:0.000px;'>False</div>
<div class="t" style='right:928.00px;top:297.08px;font:normal 15px/16px "Liberation Serif", serif;color:#404040;letter-spacing:0.000px;'>5</div>
<div class="t" style='left:103.50px;top:297.08px;font:normal 15px/16px "Liberation Serif", serif;color:#404040;letter-spacing:0.000px;'>Rob</div>
<div class="t" style='left:172.50px;top:297.08px;font:normal 15px/16px "Liberation Serif", serif;color:#404040;letter-spacing:0.000px;'>Huang</div>
<div class="t" style='left:240.00px;top:297.08px;font:normal 15px/16px "Liberation Serif", serif;color:#404040;letter-spacing:0.000px;'>Skilled Manual</div>
<div class="t" style='right:601.00px;top:297.08px;font:normal 15px/16px "Liberation Serif", serif;color:#404040;letter-spacing:0.000px;'>2,319.99</div>
<div class="t" style='left:431.00px;top:297.08px;font:normal 15px/16px "Liberation Serif", serif;color:#404040;letter-spacing:0.000px;'>Administrator</div>
<div class="t" style='left:592.00px;top:297.08px;font:normal 15px/16px "Liberation Serif", serif;color:#404040;letter-spacing:0.000px;'>Administrator</div>
<div class="t" style='left:735.50px;top:297.08px;font:normal 15px/16px "Liberation Serif", serif;color:#404040;letter-spacing:0.000px;'>True</div>
<div class="t" style='right:928.00px;top:320.70px;font:normal 15px/16px "Liberation Serif", serif;color:#404040;letter-spacing:0.000px;'>6</div>
<div class="t" style='left:103.50px;top:320.70px;font:normal 15px/16px "Liberation Serif", serif;color:#404040;letter-spacing:0.000px;'>John</div>
<div class="t" style='left:172.50px;top:320.70px;font:normal 15px/16px "Liberation Serif", serif;color:#404040;letter-spacing:0.000px;'>Ruiz</div>
<div class="t" style='left:240.00px;top:320.70px;font:normal 15px/16px "Liberation Serif", serif;color:#404040;letter-spacing:0.000px;'>Professional</div>
<div class="t" style='right:601.00px;top:320.70px;font:normal 15px/16px "Liberation Serif", serif;color:#404040;letter-spacing:0.000px;'>539.99</div>
<div class="t" style='left:431.00px;top:320.70px;font:normal 15px/16px "Liberation Serif", serif;color:#404040;letter-spacing:0.000px;'>Manager</div>
<div class="t" style='left:592.00px;top:320.70px;font:normal 15px/16px "Liberation Serif", serif;color:#404040;letter-spacing:0.000px;'>Manager</div>
<div class="t" style='left:735.50px;top:320.70px;font:normal 15px/16px "Liberation Serif", serif;color:#404040;letter-spacing:0.000px;'>True</div>
<div class="t" style='right:928.00px;top:344.32px;font:normal 15px/16px "Liberation Serif", serif;color:#404040;letter-spacing:0.000px;'>7</div>
<div class="t" style='left:103.50px;top:344.32px;font:normal 15px/16px "Liberation Serif", serif;color:#404040;letter-spacing:0.000px;'>John</div>
<div class="t" style='left:172.50px;top:344.32px;font:normal 15px/16px "Liberation Serif", serif;color:#404040;letter-spacing:0.000px;'>Miller</div>
<div class="t" style='left:240.00px;top:344.32px;font:normal 15px/16px "Liberation Serif", serif;color:#404040;letter-spacing:0.000px;'>Management</div>
<div class="t" style='right:601.00px;top:344.32px;font:normal 15px/16px "Liberation Serif", serif;color:#404040;letter-spacing:0.000px;'>2,320.49</div>
<div class="t" style='left:431.00px;top:344.32px;font:normal 15px/16px "Liberation Serif", serif;color:#404040;letter-spacing:0.000px;'>Sr. Software Developer</div>
<div class="t" style='left:592.00px;top:344.32px;font:normal 15px/16px "Liberation Serif", serif;color:#404040;letter-spacing:0.000px;'>Sr. Software Devel</div>
<div class="t" style='left:735.50px;top:344.32px;font:normal 15px/16px "Liberation Serif", serif;color:#404040;letter-spacing:0.000px;'>False</div>
<div class="t" style='right:928.00px;top:367.94px;font:normal 15px/16px "Liberation Serif", serif;color:#404040;letter-spacing:0.000px;'>8</div>
<div class="t" style='left:103.50px;top:367.94px;font:normal 15px/16px "Liberation Serif", serif;color:#404040;letter-spacing:0.000px;'>Christy</div>
<div class="t" style='left:172.50px;top:367.94px;font:normal 15px/16px "Liberation Serif", serif;color:#404040;letter-spacing:0.000px;'>Mehta</div>
<div class="t" style='left:240.00px;top:367.94px;font:normal 15px/16px "Liberation Serif", serif;color:#404040;letter-spacing:0.000px;'>Clerical</div>
<div class="t" style='right:601.00px;top:367.94px;font:normal 15px/16px "Liberation Serif", serif;color:#404040;letter-spacing:0.000px;'>24.99</div>
<div class="t" style='left:431.00px;top:367.94px;font:normal 15px/16px "Liberation Serif", serif;color:#404040;letter-spacing:0.000px;'>Module Lead</div>
<div class="t" style='left:592.00px;top:367.94px;font:normal 15px/16px "Liberation Serif", serif;color:#404040;letter-spacing:0.000px;'>Module Lead</div>
<div class="t" style='left:735.50px;top:367.94px;font:normal 15px/16px "Liberation Serif", serif;color:#404040;letter-spacing:0.000px;'>True</div>
<div class="t" style='right:928.00px;top:391.56px;font:normal 15px/16px "Liberation Serif", serif;color:#404040;letter-spacing:0.000px;'>9</div>
<div class="t" style='left:103.50px;top:391.56px;font:normal 15px/16px "Liberation Serif", serif;color:#404040;letter-spacing:0.000px;'>Rob</div>
<div class="t" style='left:172.50px;top:391.56px;font:normal 15px/16px "Liberation Serif", serif;color:#404040;letter-spacing:0.000px;'>Verhoff</div>
<div class="t" style='left:240.00px;top:391.56px;font:normal 15px/16px "Liberation Serif", serif;color:#404040;letter-spacing:0.000px;'>Clerical</div>
<div class="t" style='right:601.00px;top:391.56px;font:normal 15px/16px "Liberation Serif", serif;color:#404040;letter-spacing:0.000px;'>24.99</div>
<div class="t" style='left:431.00px;top:391.56px;font:normal 15px/16px "Liberation Serif", serif;color:#404040;letter-spacing:0.000px;'>Software Developer</div>
<div class="t" style='left:592.00px;top:391.56px;font:normal 15px/16px "Liberation Serif", serif;color:#404040;letter-spacing:0.000px;'>Software Developer</div>
<div class="t" style='left:735.50px;top:391.56px;font:normal 15px/16px "Liberation Serif", serif;color:#404040;letter-spacing:0.000px;'>True</div>
<div class="t" style='right:928.00px;top:415.18px;font:normal 15px/16px "Liberation Serif", serif;color:#404040;letter-spacing:0.000px;'>10</div>
<div class="t" style='left:103.50px;top:415.18px;font:normal 15px/16px "Liberation Serif", serif;color:#404040;letter-spacing:0.000px;'>Christy</div>
<div class="t" style='left:172.50px;top:415.18px;font:normal 15px/16px "Liberation Serif", serif;color:#404040;letter-spacing:0.000px;'>Carlson</div>
<div class="t" style='left:240.00px;top:415.18px;font:normal 15px/16px "Liberation Serif", serif;color:#404040;letter-spacing:0.000px;'>Management</div>
<div class="t" style='right:601.00px;top:415.18px;font:normal 15px/16px "Liberation Serif", serif;color:#404040;letter-spacing:0.000px;'>2,234.99</div>
<div class="t" style='left:431.00px;top:415.18px;font:normal 15px/16px "Liberation Serif", serif;color:#404040;letter-spacing:0.000px;'>Project Manager</div>
<div class="t" style='left:592.00px;top:415.18px;font:normal 15px/16px "Liberation Serif", serif;color:#404040;letter-spacing:0.000px;'>Project Manager</div>
<div class="t" style='left:735.50px;top:415.18px;font:normal 15px/16px "Liberation Serif", serif;color:#404040;letter-spacing:0.000px;'>True</div>
<div class="t" style='right:928.00px;top:438.80px;font:normal 15px/16px "Liberation Serif", serif;color:#404040;letter-spacing:0.000px;'>11</div>
<div class="t" style='left:103.50px;top:438.80px;font:normal 15px/16px "Liberation Serif", serif;color:#404040;letter-spacing:0.000px;'>Gail</div>
<div class="t" style='left:172.50px;top:438.80px;font:normal 15px/16px "Liberation Serif", serif;color:#404040;letter-spacing:0.000px;'>Erickson</div>
<div class="t" style='left:240.00px;top:438.80px;font:normal 15px/16px "Liberation Serif", serif;color:#404040;letter-spacing:0.000px;'>Professional</div>
<div class="t" style='right:601.00px;top:438.80px;font:normal 15px/16px "Liberation Serif", serif;color:#404040;letter-spacing:0.000px;'>4,319.99</div>
<div class="t" style='left:431.00px;top:438.80px;font:normal 15px/16px "Liberation Serif", serif;color:#404040;letter-spacing:0.000px;'>Administrator</div>
<div class="t" style='left:592.00px;top:438.80px;font:normal 15px/16px "Liberation Serif", serif;color:#404040;letter-spacing:0.000px;'>Administrator</div>
<div class="t" style='left:735.50px;top:438.80px;font:normal 15px/16px "Liberation Serif", serif;color:#404040;letter-spacing:0.000px;'>True</div>
<div class="t" style='right:928.00px;top:462.42px;font:normal 15px/16px "Liberation Serif", serif;color:#404040;letter-spacing:0.000px;'>12</div>
<div class="t" style='left:103.50px;top:462.42px;font:normal 15px/16px "Liberation Serif", serif;color:#404040;letter-spacing:0.000px;'>Barry</div>
<div class="t" style='left:172.50px;top:462.42px;font:normal 15px/16px "Liberation Serif", serif;color:#404040;letter-spacing:0.000px;'>Johnson</div>
<div class="t" style='left:240.00px;top:462.42px;font:normal 15px/16px "Liberation Serif", serif;color:#404040;letter-spacing:0.000px;'>Management</div>
<div class="t" style='right:601.00px;top:462.42px;font:normal 15px/16px "Liberation Serif", serif;color:#404040;letter-spacing:0.000px;'>4,968.59</div>
<div class="t" style='left:431.00px;top:462.42px;font:normal 15px/16px "Liberation Serif", serif;color:#404040;letter-spacing:0.000px;'>Project Manager</div>
<div class="t" style='left:592.00px;top:462.42px;font:normal 15px/16px "Liberation Serif", serif;color:#404040;letter-spacing:0.000px;'>Project Manager</div>
<div class="t" style='left:735.50px;top:462.42px;font:normal 15px/16px "Liberation Serif", serif;color:#404040;letter-spacing:0.000px;'>True</div>
<div class="t" style='right:928.00px;top:486.04px;font:normal 15px/16px "Liberation Serif", serif;color:#404040;letter-spacing:0.000px;'>13</div>
<div class="t" style='left:103.50px;top:486.04px;font:normal 15px/16px "Liberation Serif", serif;color:#404040;letter-spacing:0.000px;'>Peter</div>
<div class="t" style='left:172.50px;top:486.04px;font:normal 15px/16px "Liberation Serif", serif;color:#404040;letter-spacing:0.000px;'>Krebs</div>
<div class="t" style='left:240.00px;top:486.04px;font:normal 15px/16px "Liberation Serif", serif;color:#404040;letter-spacing:0.000px;'>Clerical</div>
<div class="t" style='right:601.00px;top:486.04px;font:normal 15px/16px "Liberation Serif", serif;color:#404040;letter-spacing:0.000px;'>59.53</div>
<div class="t" style='left:431.00px;top:486.04px;font:normal 15px/16px "Liberation Serif", serif;color:#404040;letter-spacing:0.000px;'>Software Developer</div>
<div class="t" style='left:592.00px;top:486.04px;font:normal 15px/16px "Liberation Serif", serif;color:#404040;letter-spacing:0.000px;'>Software Developer</div>
<div class="t" style='left:735.50px;top:486.04px;font:normal 15px/16px "Liberation Serif", serif;color:#404040;letter-spacing:0.000px;'>True</div>
<div class="t" style='right:928.00px;top:509.66px;font:normal 15px/16px "Liberation Serif", serif;color:#404040;letter-spacing:0.000px;'>14</div>
<div class="t" style='left:103.50px;top:509.66px;font:normal 15px/16px "Liberation Serif", serif;color:#404040;letter-spacing:0.000px;'>Greg</div>
<div class="t" style='left:172.50px;top:509.66px;font:normal 15px/16px "Liberation Serif", serif;color:#404040;letter-spacing:0.000px;'>Alderson</div>
<div class="t" style='left:240.00px;top:509.66px;font:normal 15px/16px "Liberation Serif", serif;color:#404040;letter-spacing:0.000px;'>Clerical</div>
<div class="t" style='right:601.00px;top:509.66px;font:normal 15px/16px "Liberation Serif", serif;color:#404040;letter-spacing:0.000px;'>23.50</div>
<div class="t" style='left:431.00px;top:509.66px;font:normal 15px/16px "Liberation Serif", serif;color:#404040;letter-spacing:0.000px;'>Software Developer</div>
<div class="t" style='left:592.00px;top:509.66px;font:normal 15px/16px "Liberation Serif", serif;color:#404040;letter-spacing:0.000px;'>Software Developer</div>
<div class="t" style='left:735.50px;top:509.66px;font:normal 15px/16px "Liberation Serif", serif;color:#404040;letter-spacing:0.000px;'>True</div>
<div class="t" style='right:928.00px;top:533.28px;font:normal 15px/16px "Liberation Serif", serif;color:#404040;letter-spacing:0.000px;'>15</div>
<div class="t" style='left:103.50px;top:533.28px;font:normal 15px/16px "Liberation Serif", serif;color:#404040;letter-spacing:0.000px;'>Tutorial</div>
<div class="t" style='left:172.50px;top:533.28px;font:normal 15px/16px "Liberation Serif", serif;color:#404040;letter-spacing:0.000px;'>Gateway</div>
<div class="t" style='left:240.00px;top:533.28px;font:normal 15px/16px "Liberation Serif", serif;color:#404040;letter-spacing:0.000px;'>Management</div>
<div class="t" style='right:601.00px;top:533.28px;font:normal 15px/16px "Liberation Serif", serif;color:#404040;letter-spacing:0.000px;'>1,200.89</div>
<div class="t" style='left:431.00px;top:533.28px;font:normal 15px/16px "Liberation Serif", serif;color:#404040;letter-spacing:0.000px;'>CEO</div>
<div class="t" style='left:592.00px;top:533.28px;font:normal 15px/16px "Liberation Serif", serif;color:#404040;letter-spacing:0.000px;'>CEO</div>
<div class="t" style='left:735.50px;top:533.28px;font:normal 15px/16px "Liberation Serif", serif;color:#404040;letter-spacing:0.000px;'>True</div>
<div class="t" style='left:62.30px;top:557.50px;font:bold 15px/16px "Liberation Serif", serif;color:#ffffff;letter-spacing:0.261px;'>Total</div>
<div class="t" style='left:356.00px;top:557.50px;font:bold 15px/16px "Liberation Serif", serif;color:#ffffff;letter-spacing:0.833px;'>28,793.57</div>
<div class="t" style='left:874.00px;top:127.00px;font:bold 13.06px/16px "Liberation Sans", sans-serif;color:#ffffff;letter-spacing:-0.450px;'>FIELDS</div>
<div class="t" style='left:900.00px;top:167.50px;font:normal 12.21px/16px "Liberation Sans", sans-serif;color:#a8a8a8;letter-spacing:-0.450px;'>Search</div>
<div class="t" style='left:910.00px;top:205.80px;font:normal 11.54px/16px "Liberation Sans", sans-serif;color:#efbf5f;letter-spacing:-0.450px;'>EmployeeSale</div>
<div class="t" style='left:926.00px;top:230.80px;font:normal 11.5px/16px "Liberation Sans", sans-serif;color:#ffffff;letter-spacing:-0.205px;'>Department ...</div>
<div class="t" style='left:926.00px;top:251.43px;font:normal 11.5px/16px "Liberation Sans", sans-serif;color:#ffffff;letter-spacing:-0.240px;'>Education</div>
<div class="t" style='left:910.60px;top:271.85px;font:normal 15px/16px "Liberation Serif", serif;color:#9a9a9a;letter-spacing:0.000px;'>Σ</div>
<div class="t" style='left:926.00px;top:272.05px;font:normal 11.37px/16px "Liberation Sans", sans-serif;color:#ffffff;letter-spacing:-0.450px;'>EmpID</div>
<div class="t" style='left:913.50px;top:292.88px;font:bold 8.5px/16px "Liberation Sans", sans-serif;color:#2b2b2b;letter-spacing:0.219px;font-style:italic;'>fx</div>
<div class="t" style='left:926.00px;top:292.67px;font:normal 10.27px/16px "Liberation Sans", sans-serif;color:#ffffff;letter-spacing:-0.450px;'>EXACT</div>
<div class="t" style='left:926.00px;top:313.30px;font:normal 11.5px/16px "Liberation Sans", sans-serif;color:#ffffff;letter-spacing:-0.337px;'>FirstName</div>
<div class="t" style='left:926.00px;top:333.92px;font:normal 11.5px/16px "Liberation Sans", sans-serif;color:#ffffff;letter-spacing:-0.174px;'>HireDate</div>
<div class="t" style='left:926.00px;top:354.55px;font:normal 11.5px/16px "Liberation Sans", sans-serif;color:#ffffff;letter-spacing:-0.365px;'>LastName</div>
<div class="t" style='left:913.50px;top:375.38px;font:bold 8.5px/16px "Liberation Sans", sans-serif;color:#2b2b2b;letter-spacing:0.219px;font-style:italic;'>fx</div>
<div class="t" style='left:926.00px;top:375.17px;font:normal 10.14px/16px "Liberation Sans", sans-serif;color:#ffffff;letter-spacing:-0.450px;'>LEFT</div>
<div class="t" style='left:913.50px;top:396.00px;font:bold 8.5px/16px "Liberation Sans", sans-serif;color:#2b2b2b;letter-spacing:0.219px;font-style:italic;'>fx</div>
<div class="t" style='left:926.00px;top:395.80px;font:normal 11.23px/16px "Liberation Sans", sans-serif;color:#ffffff;letter-spacing:-0.450px;'>LEN</div>
<div class="t" style='left:913.50px;top:416.62px;font:bold 8.5px/16px "Liberation Sans", sans-serif;color:#2b2b2b;letter-spacing:0.219px;font-style:italic;'>fx</div>
<div class="t" style='left:926.00px;top:416.42px;font:normal 10.84px/16px "Liberation Sans", sans-serif;color:#ffffff;letter-spacing:-0.450px;'>LOWER</div>
<div class="t" style='left:913.50px;top:437.25px;font:bold 8.5px/16px "Liberation Sans", sans-serif;color:#2b2b2b;letter-spacing:0.219px;font-style:italic;'>fx</div>
<div class="t" style='left:926.00px;top:437.05px;font:normal 11.5px/16px "Liberation Sans", sans-serif;color:#ffffff;letter-spacing:-0.031px;'>MID</div>
<div class="t" style='left:926.00px;top:457.67px;font:normal 11.5px/16px "Liberation Sans", sans-serif;color:#ffffff;letter-spacing:-0.169px;'>Occupation</div>
<div class="t" style='left:913.50px;top:478.50px;font:bold 8.5px/16px "Liberation Sans", sans-serif;color:#2b2b2b;letter-spacing:0.219px;font-style:italic;'>fx</div>
<div class="t" style='left:926.00px;top:478.30px;font:normal 10.24px/16px "Liberation Sans", sans-serif;color:#ffffff;letter-spacing:-0.450px;'>REPT</div>
<div class="t" style='left:913.50px;top:499.12px;font:bold 8.5px/16px "Liberation Sans", sans-serif;color:#2b2b2b;letter-spacing:0.219px;font-style:italic;'>fx</div>
<div class="t" style='left:926.00px;top:498.92px;font:normal 10.69px/16px "Liberation Sans", sans-serif;color:#ffffff;letter-spacing:-0.450px;'>RIGHT</div>
<div class="t" style='left:910.60px;top:519.35px;font:normal 15px/16px "Liberation Serif", serif;color:#9a9a9a;letter-spacing:0.000px;'>Σ</div>
<div class="t" style='left:926.00px;top:519.55px;font:normal 11.09px/16px "Liberation Sans", sans-serif;color:#ffffff;letter-spacing:-0.450px;'>Sales</div>
<div class="t" style='left:910.60px;top:539.98px;font:normal 15px/16px "Liberation Serif", serif;color:#9a9a9a;letter-spacing:0.000px;'>Σ</div>
<div class="t" style='left:926.00px;top:540.17px;font:normal 11.5px/16px "Liberation Sans", sans-serif;color:#ffffff;letter-spacing:-0.424px;'>Service Grade</div>
<div class="t" style='left:910.60px;top:560.60px;font:normal 15px/16px "Liberation Serif", serif;color:#9a9a9a;letter-spacing:0.000px;'>Σ</div>
<div class="t" style='left:926.00px;top:560.80px;font:normal 11.5px/16px "Liberation Sans", sans-serif;color:#ffffff;letter-spacing:-0.319px;'>StandardCost</div>
</body></html>
